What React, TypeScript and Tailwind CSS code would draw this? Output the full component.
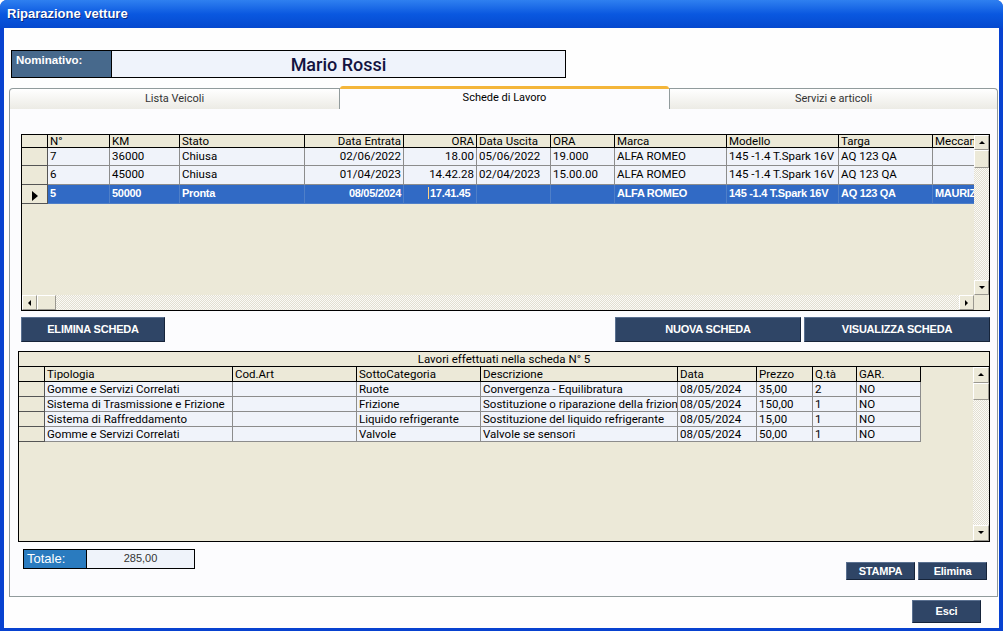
import React from "react";

const ui = { fontFamily: "Roboto, 'Liberation Sans', sans-serif" };
const arial = { fontFamily: "'Liberation Sans', Arial, sans-serif" };

type Col = { w: number; label: string; right?: boolean };

const veicoliCols: Col[] = [
  { w: 62, label: "N°" },
  { w: 70, label: "KM" },
  { w: 125, label: "Stato" },
  { w: 99, label: "Data Entrata", right: true },
  { w: 73, label: "ORA", right: true },
  { w: 74, label: "Data Uscita" },
  { w: 64, label: "ORA" },
  { w: 112, label: "Marca" },
  { w: 112, label: "Modello" },
  { w: 94, label: "Targa" },
  { w: 43, label: "Meccanico" },
];

const veicoliRows = [
  { h: 18, cells: ["7", "36000", "Chiusa", "02/06/2022", "18.00", "05/06/2022", "19.000", "ALFA ROMEO", "145 -1.4 T.Spark 16V", "AQ 123 QA", ""] },
  { h: 19, cells: ["6", "45000", "Chiusa", "01/04/2023", "14.42.28", "02/04/2023", "15.00.00", "ALFA ROMEO", "145 -1.4 T.Spark 16V", "AQ 123 QA", ""] },
  { h: 19, sel: true, cells: ["5", "50000", "Pronta", "08/05/2024", "17.41.45", "", "", "ALFA ROMEO", "145 -1.4 T.Spark 16V", "AQ 123 QA", "MAURIZIO"] },
];

const lavoriCols: Col[] = [
  { w: 188, label: "Tipologia" },
  { w: 124, label: "Cod.Art" },
  { w: 124, label: "SottoCategoria" },
  { w: 197, label: "Descrizione" },
  { w: 79, label: "Data" },
  { w: 56, label: "Prezzo" },
  { w: 44, label: "Q.tà" },
  { w: 64, label: "GAR." },
];

const lavoriRows = [
  ["Gomme e Servizi Correlati", "", "Ruote", "Convergenza - Equilibratura", "08/05/2024", "35,00", "2", "NO"],
  ["Sistema di Trasmissione e Frizione", "", "Frizione", "Sostituzione o riparazione della frizione", "08/05/2024", "150,00", "1", "NO"],
  ["Sistema di Raffreddamento", "", "Liquido refrigerante", "Sostituzione del liquido refrigerante", "08/05/2024", "15,00", "1", "NO"],
  ["Gomme e Servizi Correlati", "", "Valvole", "Valvole se sensori", "08/05/2024", "50,00", "1", "NO"],
];

function Arrow({ dir }: { dir: "up" | "down" | "left" | "right" }) {
  const pts = {
    up: "1,5 4,2 7,5",
    down: "1,2 4,5 7,2",
    left: "5,1 2,4 5,7",
    right: "2,1 5,4 2,7",
  }[dir];
  return (
    <svg width="8" height="8" viewBox="0 0 8 8">
      <polygon points={pts} fill="#000" />
    </svg>
  );
}

function ScrollBtn({ dir, className = "" }: { dir: "up" | "down" | "left" | "right"; className?: string }) {
  return (
    <div
      className={
        "flex shrink-0 items-center justify-center border border-t-white border-l-white border-r-[#9a9890] border-b-[#9a9890] bg-[#ece9d8] " +
        className
      }
    >
      <Arrow dir={dir} />
    </div>
  );
}

function Thumb({ className }: { className: string }) {
  return (
    <div
      className={
        "shrink-0 border border-t-white border-l-white border-r-[#9a9890] border-b-[#9a9890] bg-[#ece9d8] " + className
      }
    />
  );
}

const track = "bg-[repeating-conic-gradient(#fbfaf6_0_25%,#e2dfd2_0_50%)] bg-[length:2px_2px]";

function NavyButton({ label, className }: { label: string; className: string }) {
  return (
    <button
      className={
        "flex items-center justify-center border border-t-[#5a7090] border-l-[#5a7090] border-r-[#16243a] border-b-[#16243a] bg-[#2f4566] text-[11px] font-bold tracking-[-0.2px] text-white " +
        className
      }
      style={arial}
    >
      {label}
    </button>
  );
}

function VeicoliGrid() {
  return (
    <div className="ml-[11px] mt-[25px] flex h-[177px] w-[969px] flex-col border border-black bg-[#ece9d8]" style={ui}>
      <div className="flex min-h-0 flex-1">
        <div className="flex w-[953px] flex-col overflow-hidden">
          {/* header */}
          <div className="flex h-[13px] border-b border-black text-[11.5px] leading-[12px] text-black">
            <div className="w-[26px] shrink-0 border-r border-black" />
            {veicoliCols.map((c, i) => (
              <div
                key={i}
                className={"shrink-0 overflow-hidden whitespace-nowrap border-r border-black px-[2px] " + (c.right ? "text-right" : "")}
                style={{ width: c.w }}
              >
                {c.label}
              </div>
            ))}
          </div>
          {veicoliRows.map((r, ri) => (
            <div key={ri} className="flex text-[11.5px] leading-[13px]" style={{ height: r.h }}>
              <div className="flex w-[26px] shrink-0 items-center justify-center border-r border-b border-[#555] bg-[#ece9d8]">
                {r.sel && (
                  <svg width="8" height="10" viewBox="0 0 8 10" className="mt-[3px]">
                    <polygon points="1,0 7,5 1,10" fill="#000" />
                  </svg>
                )}
              </div>
              {r.cells.map((v, ci) => {
                const editing = r.sel && ci === 4;
                return (
                  <div
                    key={ci}
                    className={
                      "shrink-0 overflow-hidden whitespace-nowrap border-r border-b px-[2px] pt-[2px] " +
                      (r.sel
                        ? "border-[#4f7fc8] bg-[#316ac5] text-[11px] font-bold tracking-[-0.3px] text-white"
                        : "border-[#8c8c8c] bg-[#f0f3fa] text-black") +
                      (veicoliCols[ci].right && !editing ? " text-right" : "")
                    }
                    style={{ width: veicoliCols[ci].w, ...(r.sel ? arial : {}) }}
                  >
                    {editing ? (
                      <span className="ml-[22px] border-l border-[#ffd080] pl-[1px]">{v}</span>
                    ) : (
                      v
                    )}
                  </div>
                );
              })}
            </div>
          ))}
          <div className="flex-1" />
        </div>
        <div className={"flex w-[15px] shrink-0 flex-col " + track}>
          <ScrollBtn dir="up" className="h-[15px]" />
          <Thumb className="h-[18px]" />
          <div className="flex-1" />
          <ScrollBtn dir="down" className="h-[15px]" />
        </div>
      </div>
      <div className="flex h-[15px]">
        <div className={"flex flex-1 " + track}>
          <ScrollBtn dir="left" className="w-[15px]" />
          <Thumb className="w-[19px]" />
          <div className="flex-1" />
          <ScrollBtn dir="right" className="w-[15px]" />
        </div>
        <div className="w-[15px] bg-[#ece9d8]" />
      </div>
    </div>
  );
}

function LavoriGrid() {
  return (
    <div className="ml-[8px] mt-[9px] flex h-[191px] w-[972px] flex-col border border-black bg-[#ece9d8]" style={ui}>
      <div className="h-[15px] border-b border-black text-center text-[11.5px] leading-[14px] text-black">
        Lavori effettuati nella scheda N° 5
      </div>
      <div className="flex min-h-0 flex-1">
        <div className="flex flex-1 flex-col">
          <div className="flex h-[15px] text-[11.5px] leading-[14px] text-black">
            <div className="w-[26px] shrink-0 border-r border-b border-black" />
            {lavoriCols.map((c, i) => (
              <div
                key={i}
                className="shrink-0 overflow-hidden whitespace-nowrap border-r border-b border-black px-[2px]"
                style={{ width: c.w }}
              >
                {c.label}
              </div>
            ))}
          </div>
          {lavoriRows.map((r, ri) => (
            <div key={ri} className="flex h-[15px] text-[11.5px] leading-[14px]">
              <div className="w-[26px] shrink-0 border-r border-b border-[#555]" />
              {r.map((v, ci) => (
                <div
                  key={ci}
                  className="shrink-0 overflow-hidden whitespace-nowrap border-r border-b border-[#8c8c8c] bg-[#f0f3fa] px-[2px] text-black"
                  style={{ width: lavoriCols[ci].w }}
                >
                  {v}
                </div>
              ))}
            </div>
          ))}
        </div>
        <div className={"flex w-[16px] shrink-0 flex-col " + track}>
          <ScrollBtn dir="up" className="h-[16px]" />
          <Thumb className="h-[17px]" />
          <div className="flex-1" />
          <ScrollBtn dir="down" className="h-[16px]" />
        </div>
      </div>
    </div>
  );
}

export default function App() {
  return (
    <div className="flex h-[631px] w-[1003px] flex-col overflow-hidden rounded-t-[7px] bg-[#0842d0]">
      {/* title bar */}
      <div className="flex h-[28px] shrink-0 items-center bg-gradient-to-b from-[#2f80f0] via-[#0a58e0] to-[#0549cf] pl-[7px]">
        <span className="text-[13px] font-bold text-white [text-shadow:1px_1px_0_#0a2a80]" style={arial}>
          Riparazione vetture
        </span>
      </div>

      {/* client area */}
      <div className="mx-[4px] mb-[3px] flex flex-1 flex-col bg-[#fefefe]">
        {/* Nominativo */}
        <div className="ml-[7px] mt-[22px] flex h-[28px] w-[555px] border border-black">
          <div className="w-[100px] border-r border-black bg-[#47698c] pl-[4px] pt-[1px] text-[11.5px] font-bold text-white" style={arial}>
            Nominativo:
          </div>
          <div className="flex flex-1 items-center justify-center bg-[#eff3fb] text-[18px] font-medium text-[#131340]" style={ui}>
            Mario Rossi
          </div>
        </div>

        {/* tabs */}
        <div className="ml-[5px] mt-[8px] flex h-[23px] items-end text-[11px]" style={ui}>
          <div className="flex h-[21px] w-[331px] items-center justify-center rounded-tl-[4px] border border-b-0 border-[#919b9c] bg-gradient-to-b from-white to-[#ecebe5] text-[#333]">
            Lista Veicoli
          </div>
          <div className="flex h-[23px] w-[329px] items-start justify-center rounded-t-[3px] border-t-[3px] border-[#f4b63a] bg-[#fcfcfe] pt-[1px] text-black">
            Schede di Lavoro
          </div>
          <div className="flex h-[21px] w-[329px] items-center justify-center rounded-tr-[4px] border border-b-0 border-[#919b9c] bg-gradient-to-b from-white to-[#ecebe5] text-[#333]">
            Servizi e articoli
          </div>
        </div>

        {/* panel */}
        <div className="ml-[5px] flex h-[488px] w-[989px] flex-col border border-t-0 border-[#919b9c] bg-[#fcfcfe]">
          <VeicoliGrid />

          <div className="ml-[11px] mt-[6px] flex h-[25px]">
            <NavyButton label="ELIMINA SCHEDA" className="w-[144px]" />
            <NavyButton label="NUOVA SCHEDA" className="ml-[450px] w-[186px]" />
            <NavyButton label="VISUALIZZA SCHEDA" className="ml-[3px] w-[186px]" />
          </div>

          <LavoriGrid />

          <div className="flex">
            <div className="ml-[13px] mt-[7px] flex h-[20px] w-[172px] border border-black">
              <div className="w-[63px] border-r border-black bg-[#2a7bbf] pl-[3px] text-[13px] leading-[18px] text-white" style={arial}>
                Totale:
              </div>
              <div className="flex-1 bg-[#eff3fa] text-center text-[11px] leading-[16px] text-[#333]" style={arial}>
                285,00
              </div>
            </div>
            <NavyButton label="STAMPA" className="ml-[651px] mt-[20px] h-[18px] w-[69px]" />
            <NavyButton label="Elimina" className="ml-[3px] mt-[20px] h-[18px] w-[69px]" />
          </div>
        </div>

        <div className="flex">
          <NavyButton label="Esci" className="ml-[908px] mt-[3px] h-[23px] w-[69px]" />
        </div>
      </div>
    </div>
  );
}
